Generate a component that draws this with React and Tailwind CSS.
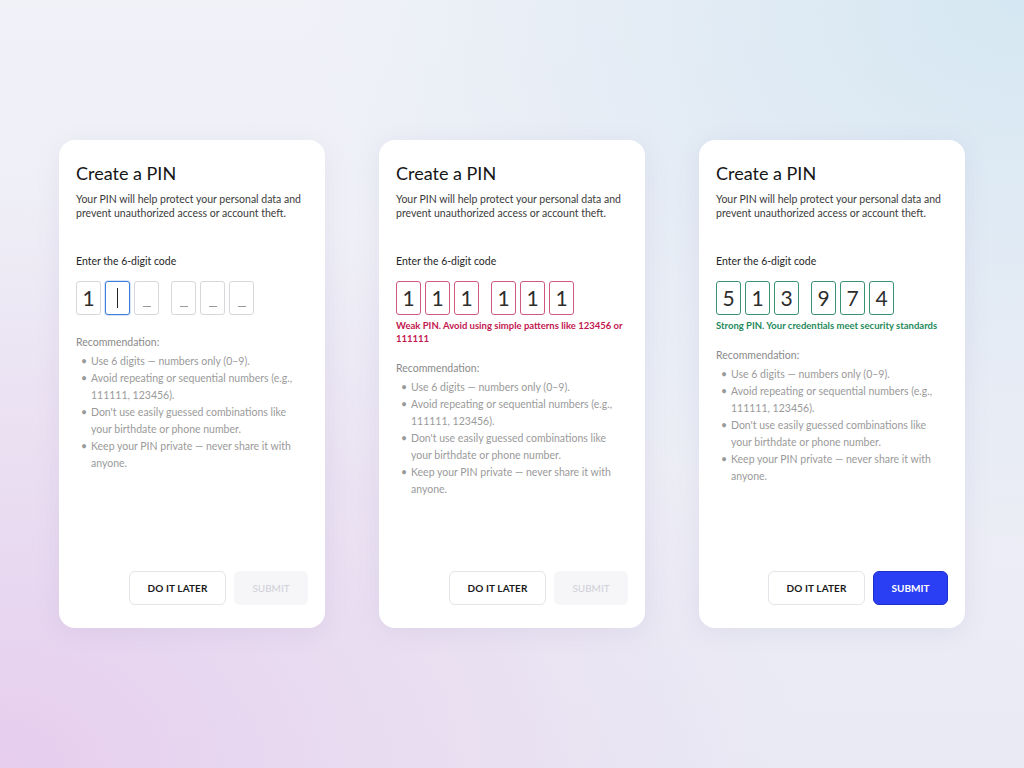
const tips = [
  'Use 6 digits — numbers only (0–9).',
  'Avoid repeating or sequential numbers (e.g., 111111, 123456).',
  "Don't use easily guessed combinations like your birthdate or phone number.",
  'Keep your PIN private — never share it with anyone.',
]

function Box({ value, state }) {
  const border =
    state === 'weak'
      ? 'border-[#cf5a7d]'
      : state === 'strong'
      ? 'border-[#3a9270]'
      : state === 'active'
      ? 'border-[#3d7ed8] ring-1 ring-[#3d7ed8]/20'
      : 'border-[#d8d8dc]'
  return (
    <div
      className={`w-[25px] h-[34px] rounded-[3px] border ${border} bg-white flex items-center justify-center text-[21px] font-normal text-[#2e2e2e]`}
    >
      {value === '_' ? (
        <span className="block w-[8px] h-px bg-[#9a9a9a] mt-[16px]" />
      ) : value === '|' ? (
        <span className="block w-[1.5px] h-[20px] bg-[#222]" />
      ) : (
        value
      )}
    </div>
  )
}

function Card({ digits, states, message, canSubmit }) {
  return (
    <div className="w-[266px] h-[488px] bg-white rounded-[16px] shadow-[0_4px_24px_rgba(120,110,170,0.10)] flex flex-col px-[17px] pt-[21px] pb-[23px]">
      <h2 className="text-[18px] leading-[24px] text-[#151515]">Create a PIN</h2>
      <p className="mt-[7px] text-[10.5px] leading-[14px] text-[#3b3b3b]">
        Your PIN will help protect your personal data and prevent unauthorized access or account theft.
      </p>
      <p className="mt-[34px] text-[10.5px] leading-[14px] text-[#1f1f1f]">Enter the 6-digit code</p>
      <div className="mt-[13px] flex gap-[12px]">
        {[0, 3].map((start) => (
          <div key={start} className="flex gap-[4px]">
            {digits.slice(start, start + 3).map((d, i) => (
              <Box key={i} value={d} state={states[start + i]} />
            ))}
          </div>
        ))}
      </div>
      {message && (
        <p className={`mt-[4px] text-[9.5px] leading-[13px] font-bold ${message.color}`}>{message.text}</p>
      )}
      <p className={`${message ? 'mt-[16px]' : 'mt-[20px]'} text-[10.5px] leading-[14px] text-[#8a8a8a]`}>
        Recommendation:
      </p>
      <ul className="mt-[4px] pl-[5px] flex flex-col">
        {tips.map((t) => (
          <li key={t} className="flex text-[10.5px] leading-[17px] text-[#9a9a9a]">
            <span className="w-[10px] shrink-0">•</span>
            <span>{t}</span>
          </li>
        ))}
      </ul>
      <div className="mt-auto flex justify-end gap-[8px]">
        <button className="w-[97px] h-[34px] rounded-[6px] border border-[#e4e4ea] bg-white text-[10px] font-bold text-[#1a1a1a] tracking-[0.01em]">
          DO IT LATER
        </button>
        {canSubmit ? (
          <button className="w-[75px] h-[34px] rounded-[6px] border border-[#1d2fc9] bg-[#2a3ff4] text-[10px] font-bold text-white">
            SUBMIT
          </button>
        ) : (
          <button className="w-[74px] h-[34px] rounded-[6px] bg-[#f6f6f9] text-[10px] text-[#cfcfd6]">
            SUBMIT
          </button>
        )}
      </div>
    </div>
  )
}

export default function App() {
  return (
    <div
      className="w-[1024px] h-[768px] flex items-center justify-center gap-[54px] bg-[#eceef6] bg-[radial-gradient(ellipse_at_0%_100%,#e6cdee_0%,rgba(232,210,238,0.6)_25%,transparent_55%),radial-gradient(ellipse_at_100%_0%,#d5e7f2_0%,rgba(214,230,242,0.5)_25%,transparent_50%),linear-gradient(180deg,#f1f2f8_0%,#e9eaf4_100%)]"
      style={{ fontFamily: 'Lato, "Noto Sans", sans-serif' }}
    >
      <Card
        digits={['1', '|', '_', '_', '_', '_']}
        states={['idle', 'active', 'idle', 'idle', 'idle', 'idle']}
      />
      <Card
        digits={['1', '1', '1', '1', '1', '1']}
        states={['weak', 'weak', 'weak', 'weak', 'weak', 'weak']}
        message={{
          color: 'text-[#c2184f]',
          text: 'Weak PIN. Avoid using simple patterns like 123456 or 111111',
        }}
      />
      <Card
        digits={['5', '1', '3', '9', '7', '4']}
        states={['strong', 'strong', 'strong', 'strong', 'strong', 'strong']}
        message={{
          color: 'text-[#1f8a5b]',
          text: 'Strong PIN. Your credentials meet security standards',
        }}
        canSubmit
      />
    </div>
  )
}
